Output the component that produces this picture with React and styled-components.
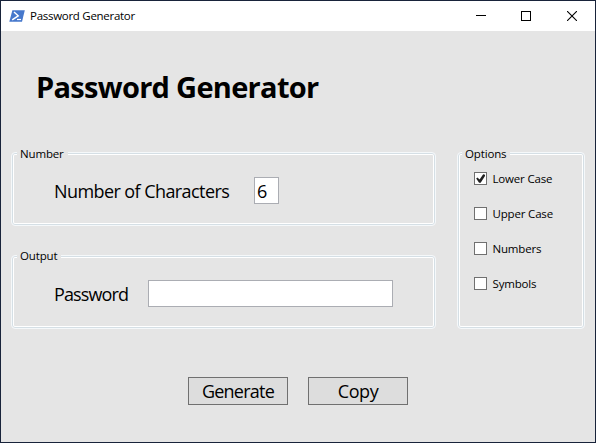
import React, { useState } from "react";
import styled, { createGlobalStyle } from "styled-components";

const GlobalStyle = createGlobalStyle`
  *, *::before, *::after { box-sizing: border-box; }
  body { margin: 0; overflow: hidden; }
  body, input, button { font-family: "Open Sans", "Noto Sans", sans-serif; color: #000; }
`;

const Window = styled.div`
  width: 596px;
  height: 443px;
  display: flex;
  flex-direction: column;
  border: 1px solid #18233a;
  background: #e5e5e5;
`;

const TitleBar = styled.header`
  height: 30px;
  flex: none;
  display: flex;
  align-items: center;
  background: #fff;
  padding-left: 8px;
`;

const AppIcon = styled.svg`
  width: 16px;
  height: 14px;
  flex: none;
`;

const TitleText = styled.span`
  flex: 1;
  margin-left: 5px;
  font-size: 11.5px;
  line-height: 16px;
  letter-spacing: -0.28px;
  white-space: nowrap;
`;

const CaptionButton = styled.button`
  width: 46px;
  height: 30px;
  padding: 0;
  border: 0;
  background: none;
  display: grid;
  place-items: center;
  svg { display: block; }
`;

const Heading = styled.h1`
  margin: 35px 0 0 35px;
  height: 42px;
  font-size: 29px;
  line-height: 42px;
  font-weight: 700;
  letter-spacing: -0.7px;
  white-space: nowrap;
`;

const Columns = styled.main`
  display: flex;
  justify-content: space-between;
  margin: 44px 10px 0;
`;

const LeftColumn = styled.div`
  display: flex;
  flex-direction: column;
  gap: 29px;
`;

const GroupBox = styled.section`
  width: ${(p) => p.$width}px;
  height: ${(p) => p.$height}px;
  border: 1px solid #f5f8fa;
  border-radius: 4px;
  box-shadow: inset 0 0 0 1px #d5dfe5, inset 0 0 0 2px #fff;
`;

const GroupLabel = styled.h2`
  width: max-content;
  height: 16px;
  margin: ${(p) => p.$top}px 0 0 ${(p) => p.$left}px;
  padding: 0 4px 0 3px;
  background: #e5e5e5;
  font-size: 11.5px;
  line-height: 17px;
  font-weight: 400;
  letter-spacing: -0.15px;
`;

const Field = styled.label`
  display: flex;
  align-items: center;
  height: 29px;
  margin: ${(p) => p.$top}px 0 0 42px;
`;

const FieldLabel = styled.span`
  width: ${(p) => p.$width}px;
  margin-bottom: 2px;
  font-size: 18px;
  line-height: 28px;
  letter-spacing: ${(p) => p.$spacing}px;
  white-space: nowrap;
`;

const TextInput = styled.input`
  width: ${(p) => p.$width}px;
  height: 27px;
  margin: 0 0 2px;
  padding: 1px 2px 0 2px;
  border: 1px solid #abadb3;
  border-radius: 0;
  background: #fff;
  font-size: 18px;
  line-height: 24px;
  outline: 0;
`;

const OptionList = styled.div`
  display: flex;
  flex-direction: column;
  gap: 20px;
  margin: 10px 0 0 16px;
`;

const Option = styled.label`
  display: flex;
  align-items: center;
  height: 15px;
  gap: 5.5px;
  font-size: 11.5px;
  line-height: 15px;
  letter-spacing: -0.17px;
  white-space: nowrap;
`;

const CheckBox = styled.input`
  appearance: none;
  width: 13px;
  height: 13px;
  margin: 0;
  border: 1px solid #707070;
  background: #fff;
  display: grid;
  place-items: center;
  &:checked::before {
    content: "";
    width: 9px;
    height: 9px;
    background: #212121;
    clip-path: polygon(2% 50%, 16% 38%, 40% 62%, 80% 4%, 100% 8%, 100% 22%, 52% 96%, 34% 96%);
  }
`;

const Actions = styled.footer`
  display: flex;
  gap: 20px;
  margin: 48px 0 0 187px;
`;

const ActionButton = styled.button`
  width: 100px;
  height: 28px;
  padding: 0;
  border: 1px solid #707070;
  background: #ddd;
  font-size: 18px;
  line-height: 26px;
  letter-spacing: ${(p) => p.$spacing}px;
`;

const OPTIONS = ["Lower Case", "Upper Case", "Numbers", "Symbols"];

export default function App() {
  const [checked, setChecked] = useState({ "Lower Case": true });
  const [count, setCount] = useState("6");
  const [password, setPassword] = useState("");

  return (
    <>
      <GlobalStyle />
      <Window>
        <TitleBar>
          <AppIcon viewBox="0 0 16 14">
            <path d="M3.4 1.2H15.8L13 12.8H0.3Z" fill="#4678cc" />
            <path d="M5 3L9.2 6.8L3.2 10.9" fill="none" stroke="#fff" strokeWidth="1.5" />
            <path d="M8 10.5H12" stroke="#fff" strokeWidth="1.2" />
          </AppIcon>
          <TitleText>Password Generator</TitleText>
          <CaptionButton aria-label="Minimize">
            <svg width="12" height="10" shapeRendering="crispEdges"><path d="M2 4.5H12" stroke="#000" /></svg>
          </CaptionButton>
          <CaptionButton aria-label="Maximize">
            <svg width="10" height="10" shapeRendering="crispEdges"><rect x=".5" y=".5" width="9" height="9" fill="none" stroke="#000" /></svg>
          </CaptionButton>
          <CaptionButton aria-label="Close">
            <svg width="10" height="10"><path d="M0 0L10 10M10 0L0 10" stroke="#000" strokeWidth="1.1" /></svg>
          </CaptionButton>
        </TitleBar>
        <Heading>Password Generator</Heading>
        <Columns>
          <LeftColumn>
            <GroupBox $width={425} $height={74}>
              <GroupLabel $top={-8} $left={5}>Number</GroupLabel>
              <Field $top={16}>
                <FieldLabel $width={200} $spacing={-0.58}>Number of Characters</FieldLabel>
                <TextInput $width={25} value={count} onChange={(e) => setCount(e.target.value)} />
              </Field>
            </GroupBox>
            <GroupBox $width={425} $height={74}>
              <GroupLabel $top={-9} $left={5}>Output</GroupLabel>
              <Field $top={17}>
                <FieldLabel $width={94} $spacing={-0.88}>Password</FieldLabel>
                <TextInput $width={245} value={password} onChange={(e) => setPassword(e.target.value)} />
              </Field>
            </GroupBox>
          </LeftColumn>
          <GroupBox $width={128} $height={177}>
            <GroupLabel $top={-8} $left={4}>Options</GroupLabel>
            <OptionList>
              {OPTIONS.map((name) => (
                <Option key={name}>
                  <CheckBox
                    type="checkbox"
                    checked={!!checked[name]}
                    onChange={(e) => setChecked({ ...checked, [name]: e.target.checked })}
                  />
                  {name}
                </Option>
              ))}
            </OptionList>
          </GroupBox>
        </Columns>
        <Actions>
          <ActionButton $spacing={-0.75}>Generate</ActionButton>
          <ActionButton $spacing={-0.4}>Copy</ActionButton>
        </Actions>
      </Window>
    </>
  );
}
